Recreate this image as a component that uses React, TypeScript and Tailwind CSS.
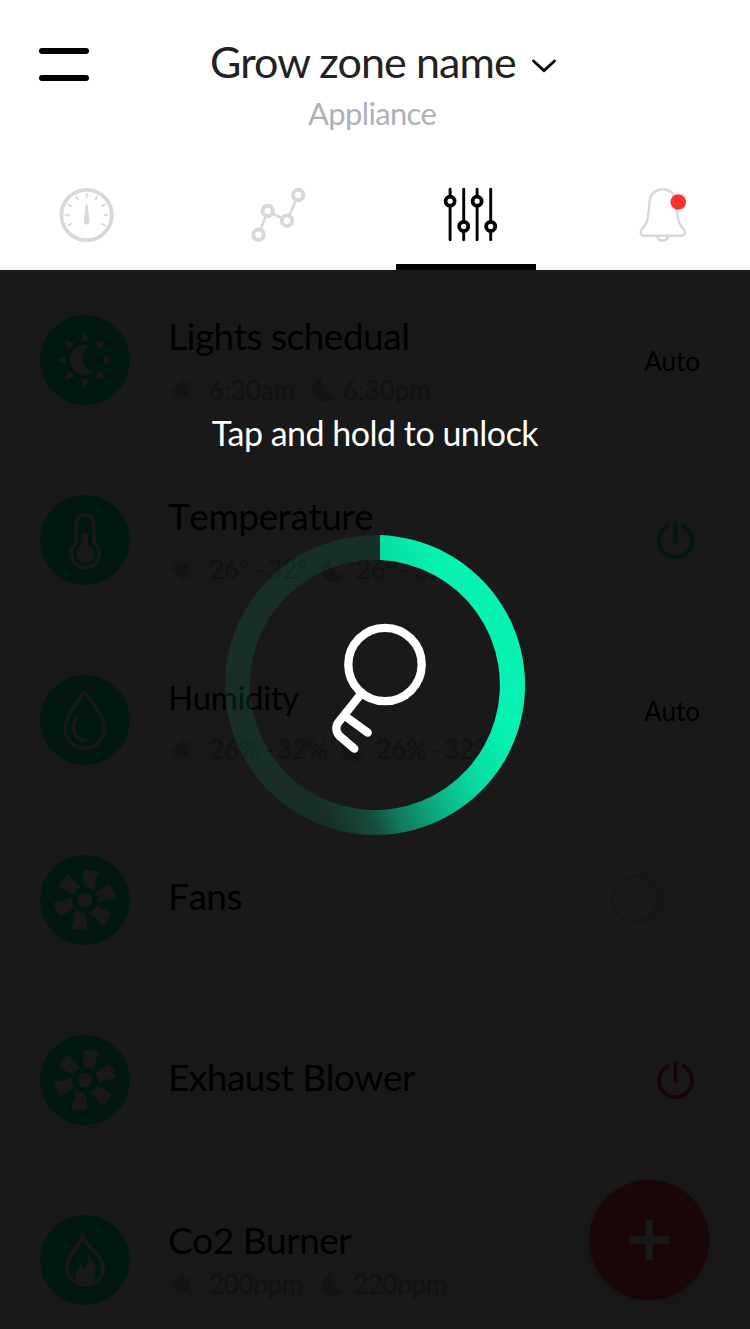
import type { ReactNode } from "react";

function Badge({ children }: { children: ReactNode }) {
  return (
    <svg viewBox="0 0 90 90" className="mt-[45px] h-[90px] w-[90px] shrink-0">
      <circle cx="45" cy="45" r="45" fill="#00f2b0" />
      {children}
    </svg>
  );
}

function DayNightIcon() {
  return (
    <g fill="#fff">
      {[0, 45, 90, 135, 180, 225, 270, 315].map((a) => (
        <path key={a} d="M44.8 17.2L49.8 26H39.8Z" transform={`rotate(${a} 44.8 45)`} />
      ))}
      <path d="M49.3 30.7A14.8 14.8 0 1 0 52.7 57A14.7 14.7 0 0 1 49.3 30.7Z" />
    </g>
  );
}

function ThermometerIcon() {
  return (
    <g>
      <path
        d="M36.3 28.6A8.8 8.8 0 0 1 53.9 28.6V46.2Q54.2 48 55.5 49.2A14.1 14.1 0 1 1 34.7 49.2Q36 48 36.3 46.2Z"
        fill="none"
        stroke="#fff"
        strokeWidth="3.8"
      />
      <circle cx="45.1" cy="58.8" r="9.2" fill="#fff" />
      <path d="M45.1 40.6V56" stroke="#fff" strokeWidth="5.8" strokeLinecap="round" />
    </g>
  );
}

function DropIcon() {
  return (
    <g fill="none" stroke="#fff" strokeWidth="3.4" strokeLinecap="round">
      <path d="M44.6 17.8C43.5 17.8 42.9 18.4 42.3 19.5C37 29 25 41 25 53.6A19.7 19.7 0 0 0 64.4 53.6C64.4 41 52.2 29 46.9 19.5C46.3 18.4 45.7 17.8 44.6 17.8Z" />
      <path d="M37.2 42.3C34 47 33 50.5 33.6 54.5C34.5 61 39.5 65.3 45.5 65.5" />
    </g>
  );
}

function FanIcon() {
  return (
    <g fill="#fff">
      {[0, 60, 120, 180, 240, 300].map((a) => (
        <path
          key={a}
          d="M43.3 17.2Q43.4 15.2 45.4 15.1Q51.5 15 57 16.4Q58.9 17 58.3 19Q54.4 27 54.2 35.2Q50.2 31.8 44.2 32.1Q42.5 25 43.3 17.2Z"
          transform={`rotate(${a} 45 45)`}
        />
      ))}
      <circle cx="45" cy="45" r="7.3" />
    </g>
  );
}

function FlameIcon() {
  return (
    <g>
      <path
        d="M42.3 21.2C40 31 27 39.5 27 53C27 63.5 34.5 69.3 45 69.3C55.5 69.3 63 63.5 63 53C63 40.5 48.5 34 42.3 21.2Z"
        fill="none"
        stroke="#fff"
        strokeWidth="3.8"
      />
      <path
        d="M38.8 67.5C36 65.5 34.6 63 35.2 59.8C36 56 39.3 54 40 49.3C42 51 43.2 53 43.3 55.8C47 51.5 48.6 46 47.6 39.5C52.5 43 55.5 48.5 55.5 54C55.5 60 54.5 64.5 51 67.5Z"
        fill="#fff"
      />
    </g>
  );
}

function Sun() {
  return (
    <svg viewBox="0 0 28 28" className="h-7 w-7" fill="#cdcdd3">
      <circle cx="14" cy="14" r="8" />
      {[0, 45, 90, 135, 180, 225, 270, 315].map((a) => (
        <path key={a} d="M14 0.8L16 4.6H12Z" transform={`rotate(${a} 14 14)`} />
      ))}
    </svg>
  );
}

function Moon() {
  return (
    <svg viewBox="0 0 24 26" className="h-[26px] w-6" fill="#cdcdd3">
      <path d="M10.6 0.8A12.3 12.3 0 1 0 23.5 18.8A14 14 0 0 1 10.6 0.8Z" />
    </svg>
  );
}

function Power({ color }: { color: string }) {
  return (
    <svg viewBox="0 0 40 40" className="mr-14 mt-[70px] h-10 w-10" fill="none" stroke={color} strokeWidth="4" strokeLinecap="round">
      <path d="M13.5 6.2A16.5 16.5 0 1 0 29.5 6.2M21.5 3V21.5" />
    </svg>
  );
}

function Switch() {
  return (
    <div className="mr-10 mt-[64px] flex h-[50px] w-[99px] items-center rounded-full bg-[#e4f6f0] pl-[3px]">
      <div className="h-[42px] w-[42px] rounded-full bg-white shadow-[0_0_5px_1px_rgba(0,0,0,0.15)]" />
    </div>
  );
}

type RowProps = {
  icon: ReactNode;
  title: string;
  titleClass: string;
  readings?: ReactNode;
  right?: ReactNode;
};

function Row({ icon, title, titleClass, readings, right }: RowProps) {
  return (
    <div className="flex h-[180px] shrink-0 items-start border-b border-[#f2f2f2] pl-10">
      <Badge>{icon}</Badge>
      <div className="ml-[38px] flex-1 whitespace-nowrap">
        <div className={titleClass}>{title}</div>
        {readings}
      </div>
      {right}
    </div>
  );
}

type ReadingsProps = { day: string; night: string; className: string; iconClass?: string; dayClass: string; nightClass: string };

function Readings({ day, night, className, iconClass = "pt-0.5", dayClass, nightClass }: ReadingsProps) {
  return (
    <div className={className}>
      <span className={iconClass}>
        <Sun />
      </span>
      <span className={dayClass}>{day}</span>
      <span className={iconClass}>
        <Moon />
      </span>
      <span className={nightClass}>{night}</span>
    </div>
  );
}

function Header() {
  return (
    <header className="flex h-[270px] flex-col bg-white">
      <div className="flex h-[188px] items-start pl-[39px]">
        <button className="mt-12 flex w-[50px] flex-col gap-[21px]" aria-label="Menu">
          <span className="h-1.5 w-full rounded-full bg-black" />
          <span className="h-1.5 w-full rounded-full bg-black" />
        </button>
        <div className="ml-[121px] whitespace-nowrap pt-[35px]">
          <div className="flex items-center">
            <h1 className="w-[321px] text-[43px] leading-[54px] tracking-[-0.9px] text-[#222]">Grow zone name</h1>
            <svg viewBox="0 0 26 14" className="mt-[7px] h-3.5 w-[26px]" fill="none" stroke="#000" strokeWidth="2.8" strokeLinecap="round">
              <path d="M2.5 2L13 11.5L23.5 2" />
            </svg>
          </div>
          <p className="ml-[98px] mt-[5px] text-[31px] leading-[38px] tracking-[-0.65px] text-[#afb0bd]">Appliance</p>
        </div>
      </div>
      <nav className="flex h-[76px] items-start gap-[136px] pl-[59px]">
        <svg viewBox="59 187 56 56" className="-mt-px h-14 w-14" fill="#d8d8d8">
          <circle cx="86.6" cy="215" r="25.2" fill="none" stroke="#d8d8d8" strokeWidth="3.8" />
          {[-120, -90, -60, -30, 0, 30, 60, 90, 120].map((a) => (
            <path key={a} d="M86 193.6h1.2v4h-1.2z" stroke="#d8d8d8" strokeWidth=".7" transform={`rotate(${a} 86.6 215)`} />
          ))}
          <path d="M85.7 205Q86.6 203 87.5 205L89.6 221.5A3 3 0 1 1 83.6 221.5Z" />
        </svg>
        <svg viewBox="251 187 56 56" className="-mt-px h-14 w-14" stroke="#d8d8d8">
          <path d="M258.5 234.7L267.7 211L287 220.7L298.2 195" fill="none" strokeWidth="2.6" />
          <g fill="#fff" strokeWidth="4">
            <circle cx="258.5" cy="234.7" r="5.2" />
            <circle cx="267.7" cy="211" r="5.2" />
            <circle cx="287" cy="220.7" r="5.2" />
            <circle cx="298.2" cy="195" r="5.2" />
          </g>
        </svg>
        <svg viewBox="443 187 56 56" className="-mt-px h-14 w-14" stroke="#000" strokeLinecap="round">
          <path d="M450.1 189.3V239.7M463.7 189.3V239.7M477.1 189.3V239.7M490.7 189.3V239.7" strokeWidth="2.9" />
          <g fill="#fff" strokeWidth="3.8">
            <circle cx="450.1" cy="201.2" r="4.5" />
            <circle cx="463.7" cy="226.4" r="4.5" />
            <circle cx="477.1" cy="201.2" r="4.5" />
            <circle cx="490.7" cy="226.4" r="4.5" />
          </g>
        </svg>
        <svg viewBox="635 187 56 56" className="-mt-px h-14 w-14" fill="none" stroke="#d8d8d8" strokeWidth="2.5">
          <path d="M662.8 189.3C654.5 189.3 650 195.5 649.5 202C648.8 211 648.5 219.5 645.8 224C644 227.5 641.5 229 640.8 231.5C640.3 234 641.6 235.8 644 235.8H681.6C684 235.8 685.3 234 684.8 231.5C684.1 229 681.6 227.5 679.8 224C677.1 219.5 676.8 211 676.1 202C675.6 195.5 671.1 189.3 662.8 189.3Z" />
          <path d="M657.3 236.5C658.5 241.8 667.1 241.8 668.3 236.5" />
          <circle cx="678.2" cy="202" r="7.8" fill="#ff3232" stroke="none" />
        </svg>
      </nav>
      <div className="flex h-1.5 items-end">
        <span className="h-1 w-[395.5px] bg-[#f4f4f4]" />
        <span className="h-1.5 w-[140.5px] bg-black" />
        <span className="h-1 flex-1 bg-[#f4f4f4]" />
      </div>
    </header>
  );
}

function UnlockDial() {
  return (
    <svg viewBox="0 0 300 300" className="mt-20 h-[300px] w-[300px]" fill="none">
      <defs>
        <linearGradient id="sweep" gradientUnits="userSpaceOnUse" x1="-16.6" y1="7" x2="168" y2="-71">
          <stop offset="0" stopColor="#06f1b2" stopOpacity="0" />
          <stop offset=".05" stopColor="#06f1b2" stopOpacity=".03" />
          <stop offset=".21" stopColor="#06f1b2" stopOpacity=".15" />
          <stop offset=".335" stopColor="#06f1b2" stopOpacity=".38" />
          <stop offset=".435" stopColor="#06f1b2" stopOpacity=".52" />
          <stop offset=".62" stopColor="#06f1b2" stopOpacity=".75" />
          <stop offset=".785" stopColor="#06f1b2" stopOpacity=".9" />
          <stop offset="1" stopColor="#06f1b2" />
        </linearGradient>
      </defs>
      <circle cx="150" cy="150" r="137.5" stroke="#06f1b2" strokeOpacity=".1" strokeWidth="25" />
      <path d="M155 0.1A150 150 0 1 1 75 279.9L87.5 258.3A125 125 0 1 0 155 25.1Z" fill="url(#sweep)" />
      <g stroke="#fff" strokeWidth="8.3" strokeLinecap="round">
        <circle cx="160" cy="129.5" r="36.7" />
        <path d="M136 159L113.8 186.8C110.3 191.5 110.5 197 115 201.5L129.3 213.7M122 182.5L142.7 197.7" />
      </g>
    </svg>
  );
}

const title = "pt-11 text-[37px] leading-[44px] tracking-[-0.5px] [font-kerning:none]";
const reading = "flex items-center text-[26px] leading-8 text-[#b4b4be]";

export default function App() {
  return (
    <div className="h-[1329px] w-[750px] overflow-hidden bg-white font-['Lato',sans-serif]">
      <Header />
      <main className="relative flex h-[1059px] flex-col overflow-hidden text-black">
        <Row
          icon={<DayNightIcon />}
          title="Lights schedual"
          titleClass={title}
          readings={<Readings day="6:30am" night="6:30pm" className={`${reading} mt-4`} iconClass="pt-0" dayClass="ml-[13px] w-[103px]" nightClass="ml-[7px]" />}
          right={<span className="mr-[50px] mt-[75px] text-[26px] leading-8">Auto</span>}
        />
        <Row
          icon={<ThermometerIcon />}
          title="Temperature"
          titleClass={title}
          readings={<Readings day="26° - 32°" night="26° - 32°" className={`${reading} mt-[15px] [word-spacing:-3px]`} dayClass="ml-[13px] w-[112px]" nightClass="ml-[11px]" />}
          right={<Power color="#00f2b0" />}
        />
        <Row
          icon={<DropIcon />}
          title="Humidity"
          titleClass="pt-[45px] text-[33px] leading-[44px] tracking-[-0.4px] [font-kerning:none]"
          readings={<Readings day="26% - 32%" night="26% - 32%" className={`${reading} mt-3.5 [word-spacing:-3px]`} dayClass="ml-[13px] w-[132px]" nightClass="ml-[11px]" />}
          right={<span className="mr-[50px] mt-[65px] text-[26px] leading-8">Auto</span>}
        />
        <Row icon={<FanIcon />} title="Fans" titleClass="pt-16 text-[37px] leading-[44px] tracking-[-0.5px] [font-kerning:none]" right={<Switch />} />
        <Row icon={<FanIcon />} title="Exhaust Blower" titleClass="pt-[65px] text-[37px] leading-[44px] tracking-[-0.5px] [font-kerning:none]" right={<Power color="#ff3232" />} />
        <Row
          icon={<FlameIcon />}
          title="Co2 Burner"
          titleClass="pt-12 text-[37px] leading-[44px] tracking-[-0.5px] [font-kerning:none]"
          readings={<Readings day="200ppm" night="220ppm" className={`${reading} mt-1.5 tracking-[-0.3px]`} dayClass="ml-[13px] w-[113px]" nightClass="ml-[7px]" />}
        />
        <button className="absolute left-[589px] top-[910px] flex h-[120px] w-[120px] items-center justify-center rounded-full bg-[#ff3c46] shadow-[0_3px_12px_rgba(0,0,0,0.25)]" aria-label="Add">
          <svg viewBox="0 0 40 40" className="h-10 w-10" stroke="#fff" strokeWidth="7.4">
            <path d="M20 0V40M0 20H40" />
          </svg>
        </button>
        <div className="absolute inset-0 flex flex-col items-center bg-black/90 pt-[141px]">
          <p className="whitespace-nowrap text-[34px] leading-[44px] tracking-[-0.5px] text-white">Tap and hold to unlock</p>
          <UnlockDial />
        </div>
      </main>
    </div>
  );
}
